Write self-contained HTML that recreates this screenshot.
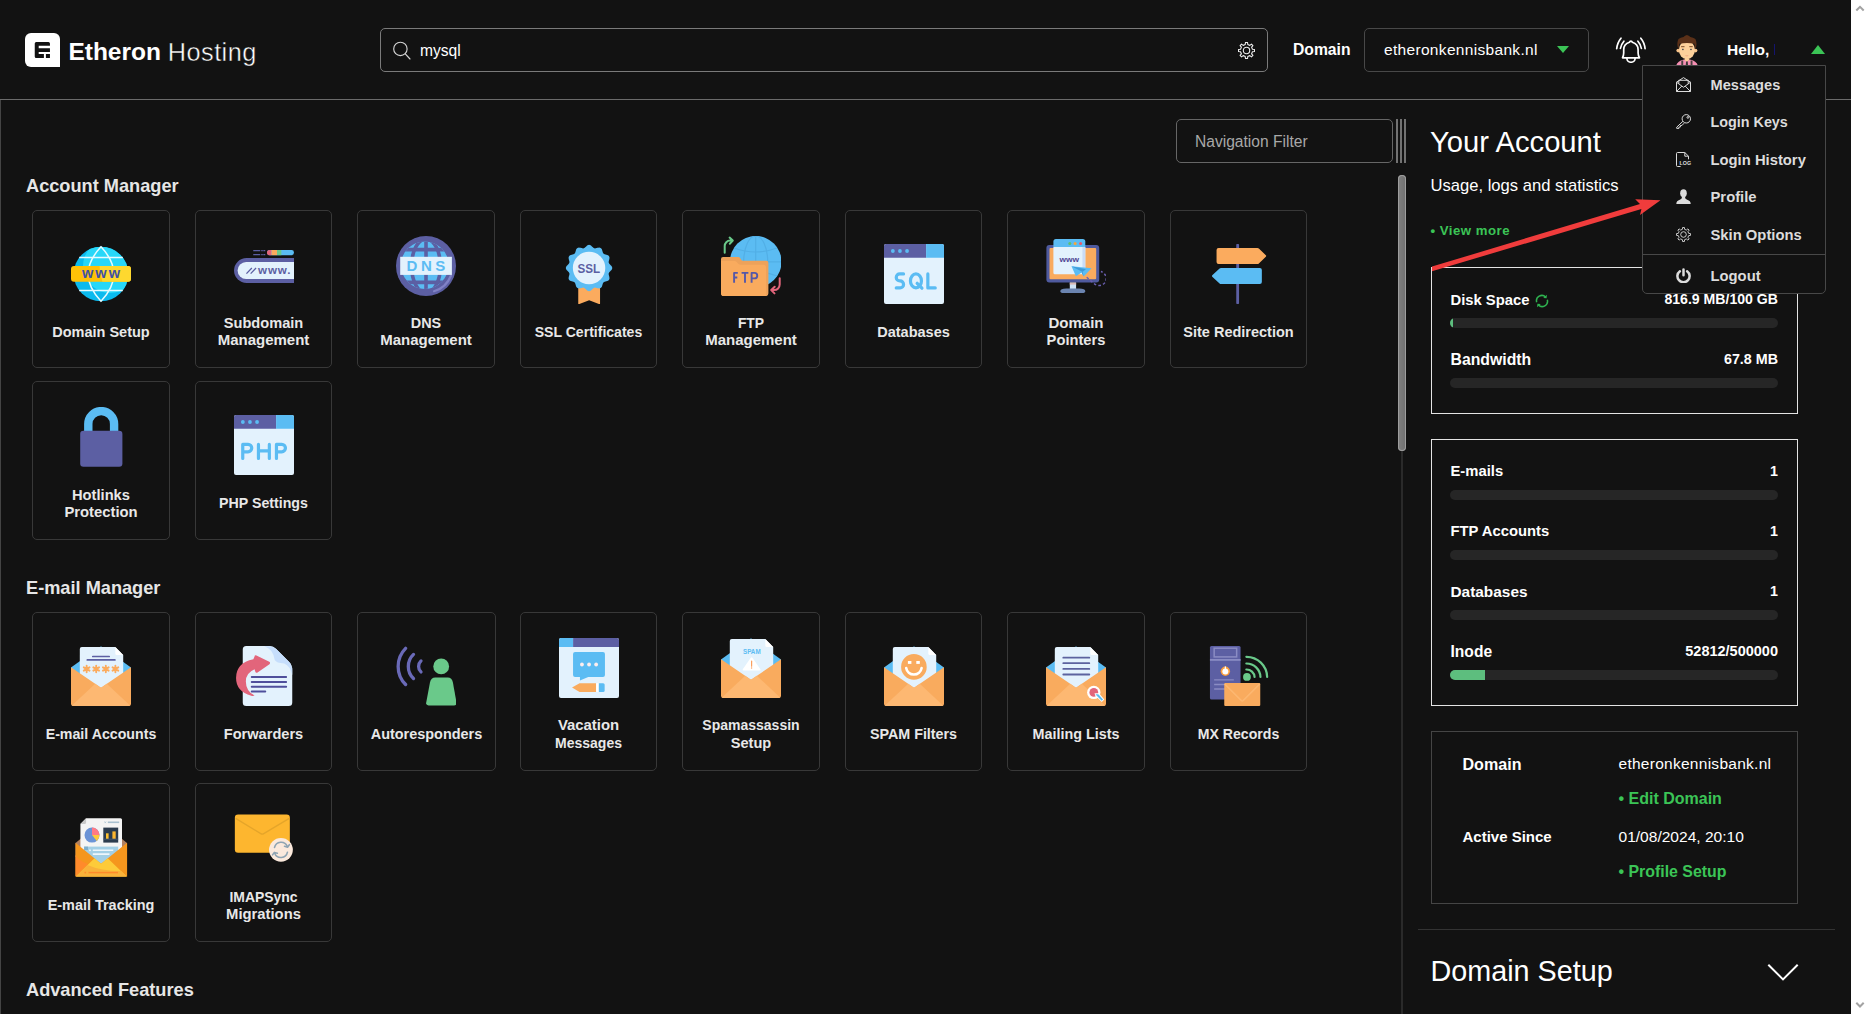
<!DOCTYPE html>
<html lang="en">
<head>
<meta charset="utf-8">
<title>Etheron Hosting</title>
<style>
*{box-sizing:border-box;margin:0;padding:0}
html,body{width:1869px;height:1014px;overflow:hidden;background:#121212}
body{position:relative;font-family:"Liberation Sans",sans-serif;color:#fff}
.abs{position:absolute}
.t{position:absolute;white-space:nowrap;line-height:1}
.b{font-weight:700}
/* header */
#hdrline{left:0;top:99px;width:1851px;height:1px;background:#6b6b6b}
#leftline{left:0;top:100px;width:1px;height:914px;background:#444}
#vscroll{left:1851px;top:0;width:18px;height:1014px;background:#fff}
#logo{left:25px;top:33px;width:35px;height:34px;background:#fff;border-radius:6px 6px 0 6px}
#search{left:380px;top:28px;width:888px;height:44px;border:1px solid #7a7a7a;border-radius:5px}
#domsel{left:1364px;top:28px;width:225px;height:44px;border:1px solid #484848;border-radius:5px}
.tri-d{width:0;height:0;border-left:6.5px solid transparent;border-right:6.5px solid transparent;border-top:7.5px solid #3bc456}
.tri-u{width:0;height:0;border-left:7.7px solid transparent;border-right:7.7px solid transparent;border-bottom:9.3px solid #3bc456}
/* dropdown */
#dd{left:1642px;top:65px;width:184px;height:229px;background:#121212;border:1px solid #484848;border-radius:0 0 5px 5px}
#ddsep{left:1643px;top:254px;width:182px;height:1px;background:#484848}
.ddt{color:#dcdcdc;font-weight:700;left:1710.5px}
/* main */
#navf{left:1176px;top:119px;width:217px;height:44px;border:1px solid #666;border-radius:5px}
.bar3{top:119px;width:2px;height:44px;background:#727272}
#thumb{left:1398px;top:175px;width:8px;height:276px;border-radius:4px;background:linear-gradient(90deg,#808080,#707070);box-shadow:inset 0 0 0 1px #9e9e9e}
#track{left:1401px;top:451px;width:2px;height:563px;background:#2a2a2a}
.sec{color:#e6e6e6;font-weight:700;left:26px}
.card{position:absolute;width:138px;height:158px;border:1px solid #383838;border-radius:5px}
.card svg{position:absolute;left:38px;width:60px;height:60px}
.card.one svg{top:33px}
.card.two svg{top:25px}
.card .lb{position:absolute;left:0;right:0;text-align:center;font-weight:700;font-size:14.4px;line-height:17px;color:#e8e8e8}
.card.one .lb{top:112.5px}
.card.two .lb{top:104.2px;line-height:16.4px}
/* right */
.box{position:absolute;left:1431px;width:367px;border:1px solid #e4e4e4}
.pb{position:absolute;left:1450px;width:328px;height:10px;border-radius:5px;background:#262626;overflow:hidden}
.pb i{display:block;height:10px;background:#5dbe7e}
.lbl{left:1450.5px;font-weight:700}
.val{right:91px;font-weight:700;text-align:right}
.g{color:#3bc456;font-weight:700}
</style>
</head>
<body>
<!-- HEADER -->
<div class="abs" id="logo"></div>
<div class="t b" style="left:68.4px;top:39.7px;font-size:24.5px">Etheron</div>
<div class="t" style="left:167.8px;top:39.9px;font-size:25.3px;letter-spacing:.45px;-webkit-text-stroke:.45px #121212">Hosting</div>
<div class="abs" id="search"></div>
<div class="t" style="left:420px;top:42.5px;font-size:15.6px">mysql</div>
<div class="t b" style="left:1293px;top:41.5px;font-size:15.7px">Domain</div>
<div class="abs" id="domsel"></div>
<div class="t" style="left:1384px;top:41.5px;font-size:15.5px;letter-spacing:.32px">etheronkennisbank.nl</div>
<div class="abs tri-d" style="left:1557px;top:46px"></div>
<div class="t b" style="left:1727px;top:41.5px;font-size:15.5px">Hello,</div>
<div class="abs tri-u" style="left:1810.5px;top:44.7px"></div><div class="abs" style="left:1774px;top:44px;width:1px;height:11px;background:#14146e"></div>

<svg class="abs" style="left:25px;top:33px" width="35" height="34" viewBox="0 0 35 34"><path d="M11.25 9H23.45A1.5 1.5 0 0 1 24.95 10.5V12.8H13.7V15.2H24.95V18.9H13.7V21H18.9V24.95H11.25A1.5 1.5 0 0 1 9.75 23.45V10.500A1.500 1.500 0 0 1 11.250 9ZM20.900 21H24.950V24.950H20.900Z" fill="#121212"/></svg>
<svg class="abs" style="left:391px;top:40px" width="22" height="22" viewBox="0 0 22 22" fill="none" stroke="#d4d4d4" stroke-width="1.150" stroke-linecap="round"><circle cx="9.400" cy="8.900" r="6.700"/><path d="M14.300 13.900L19 19"/></svg>
<svg class="abs" style="left:1238px;top:42px" width="17" height="17" viewBox="0 0 17 17" fill="none" stroke="#eee" stroke-width="1.100" stroke-linejoin="round"><path d="M7.22 2.54L7.48 0.46L9.52 0.46L9.78 2.54L11.81 3.38L13.46 2.10L14.90 3.54L13.62 5.19L14.46 7.22L16.54 7.48L16.54 9.52L14.46 9.78L13.62 11.81L14.90 13.46L13.46 14.90L11.81 13.62L9.78 14.46L9.52 16.54L7.48 16.54L7.22 14.46L5.19 13.62L3.54 14.90L2.10 13.46L3.38 11.81L2.54 9.78L0.46 9.52L0.46 7.48L2.54 7.22L3.38 5.19L2.10 3.54L3.54 2.10L5.19 3.38Z"/><circle cx="8.500" cy="8.500" r="3.200"/></svg>
<svg class="abs" style="left:1615px;top:36.8px" width="32" height="26.4" preserveAspectRatio="none" viewBox="0 0 32 28" fill="none" stroke="#fff" stroke-width="1.700" stroke-linecap="round" stroke-linejoin="round"><path d="M15.900 4.400Q17 4.400 17.300 5.600Q23.100 7.500 23.100 13.500V17Q23.100 19.500 24.500 22.100H7.500Q8.700 19.500 8.700 17V13.500Q8.700 7.500 14.500 5.600Q14.800 4.400 15.900 4.400Z"/><path d="M11.900 22.700A4.100 4.100 0 0 0 20.100 22.700"/><path d="M6 1.200Q2.200 6 1.700 12.500M8.900 4.400Q5.900 8 5.400 12.200M25.800 1.200Q29.600 6 30.100 12.500M22.900 4.400Q25.900 8 26.400 12.200"/></svg>
<svg class="abs" style="left:1675px;top:34px" width="24" height="32" viewBox="0 0 24 32"><path d="M10 22H13.800V28H10Z" fill="#f9c48a"/><path d="M1 32Q2.500 26.800 9.200 25.600L11.900 27.600L14.600 25.600Q21.500 26.800 23 32Z" fill="#f58fb3"/><path d="M6.300 26.500H8.200V32H6.300ZM15.600 26.500H17.500V32H15.600Z" fill="#4a4040"/><path d="M11.100 27.200H12.700L13.100 32H10.700Z" fill="#3d3535"/><path d="M9.200 25.600L11.900 27.600L14.600 25.600L13.600 24.800H10.200Z" fill="#fdd09a"/>
<circle cx="3.200" cy="16.600" r="1.800" fill="#f9c48a"/><circle cx="20.600" cy="16.600" r="1.800" fill="#f9c48a"/><ellipse cx="11.900" cy="16" rx="8.100" ry="9.100" fill="#fdd09a"/>
<path d="M3.300 15.500Q1.300 9 3.500 5Q5.500 3.300 8.500 3L10 1.800L11.900 0.900L13.800 1.800L15.300 3Q18.300 3.300 20.400 5Q22.500 9 20.500 15.500L19.300 9.800Q12 8.300 4.500 9.800Z" fill="#5a3018"/>
<path d="M6.100 12.700H9.500M14.300 12.700H17.700" stroke="#7a4a25" stroke-width="1"/><rect x="7" y="14.800" width="1.700" height="1.300" fill="#555"/><rect x="15.100" y="14.800" width="1.700" height="1.300" fill="#555"/><path d="M10.500 21.600Q11.900 22.200 13.300 21.600" stroke="#f0a080" stroke-width=".800" fill="none"/></svg>
<div class="abs" id="hdrline"></div>
<div class="abs" id="leftline"></div>

<!-- MAIN LEFT -->
<div class="abs" id="navf"></div>
<div class="t" style="left:1195px;top:133.5px;font-size:15.6px;color:#a8a8a8">Navigation Filter</div>
<div class="abs bar3" style="left:1396px"></div><div class="abs bar3" style="left:1400px"></div><div class="abs bar3" style="left:1404px"></div>
<div class="abs" id="thumb"></div>
<div class="abs" id="track"></div>

<div class="t sec" style="top:176.5px;font-size:18.2px">Account Manager</div>
<div class="card one" style="left:32px;top:210px;width:138px"><svg viewBox="0 0 60 60" id="ic210_0"><defs><clipPath id="cg"><circle cx="30" cy="30" r="27.3"/></clipPath></defs><circle cx="30" cy="30" r="27.3" fill="#0bbaee"/><circle cx="39" cy="22" r="27" fill="#27d7f8" clip-path="url(#cg)"/><g fill="none" stroke="#e6fbff" stroke-width="1.5"><path d="M8.2 13.5H51.8M8.2 46.5H51.8"/><path d="M30 2.8Q4.4 30 30 57.2Q55.6 30 30 2.8Z"/></g><rect x="0" y="22" width="60" height="15.7" rx="3" fill="#ffc107"/><path d="M28.5 22H57a3 3 0 0 1 3 3v9.7a3 3 0 0 1-3 3H31.5Q28.5 30 28.5 22Z" fill="#fed82f"/><text x="10.9" y="33.9" font-family="Liberation Sans,sans-serif" font-weight="700" font-size="14.6" fill="#3f51a5" textLength="38.3" lengthAdjust="spacing">www</text></svg><div class="lb"><span style="font-size:14.5px">Domain Setup</span></div></div>
<div class="card two" style="left:195px;top:210px;width:137px"><svg viewBox="0 0 60 60" id="ic210_1"><g transform="translate(-.75 0)"><path d="M61 22H13.3a12.5 12.5 0 0 0 0 25H61Z" fill="#5c5fa3"/><path d="M61 25.9H12.9a8.55 8.55 0 0 0 0 17.1H61Z" fill="#e3f2fd"/><path d="M13.2 37.6L18.6 32M17.4 37.6L22.8 32" stroke="#5c5fa3" stroke-width="1.3" fill="none"/><text x="24.8" y="37.8" font-family="Liberation Sans,sans-serif" font-weight="700" font-size="11.6" fill="#5c5fa3" textLength="32.5" lengthAdjust="spacing">www.</text><path d="M20 14.6H32M20 18.6H32" stroke="#5c5fa3" stroke-width="1.4" stroke-dasharray="7 1 1.5 .6 1.9 0"/><rect x="33.9" y="14" width="26.8" height="5.2" rx="2.4" fill="#5bbcf3"/><path d="M36.3 14h2V19.2h-2a2.4 2.4 0 0 1 0-5.2Z" fill="#e2657b"/><rect x="38.3" y="14" width="5.5" height="5.2" fill="#fbab5e"/><rect x="43.8" y="14" width="4.3" height="5.2" fill="#6ac98a"/></g></svg><div class="lb"><span style="font-size:14.6px">Subdomain</span><br><span style="font-size:15.0px">Management</span></div></div>
<div class="card two" style="left:357px;top:210px;width:138px"><svg viewBox="0 0 60 60" id="ic210_2"><defs><clipPath id="cd"><circle cx="28.8" cy="29.2" r="23.8"/></clipPath></defs><circle cx="30" cy="30" r="30" fill="#5c5fa3"/><circle cx="28.8" cy="29.2" r="23.8" fill="#5bbcf3"/><g fill="none" stroke="#5c5fa3" stroke-width="3.6" clip-path="url(#cd)"><path d="M30 2V58M4 13.6H56M4 46.4H56"/><ellipse cx="30" cy="30" rx="14.4" ry="27"/></g><path d="M55 39.500A26.500 26.500 0 0 1 38 55.300" stroke="#8082c6" stroke-width="2.200" fill="none" stroke-linecap="round"/><rect x="4.2" y="20.8" width="51.7" height="18.1" fill="#e3f2fd"/><text x="10.6" y="35.3" font-family="Liberation Sans,sans-serif" font-weight="700" font-size="15" fill="#5bbcf3" textLength="38.6" lengthAdjust="spacing">DNS</text></svg><div class="lb"><span style="font-size:14.4px">DNS</span><br><span style="font-size:15.0px">Management</span></div></div>
<div class="card one" style="left:520px;top:210px;width:137px"><svg viewBox="0 0 60 60" id="ic210_3"><g transform="translate(-.75 0)"><path d="M20 43H41.8V59.6a.6 .6 0 0 1-.9 .5L30.9 56.3 20.9 60.1a.6 .6 0 0 1-.9-.5Z" fill="#fbab5e"/><path d="M30.80 0.80L31.56 0.92L32.29 1.26L32.99 1.77L33.65 2.39L34.26 3.02L34.86 3.59L35.46 4.03L36.08 4.30L36.75 4.38L37.49 4.29L38.29 4.10L39.14 3.86L40.02 3.66L40.88 3.56L41.69 3.63L42.40 3.91L42.99 4.39L43.46 5.05L43.81 5.84L44.07 6.70L44.29 7.56L44.52 8.35L44.82 9.03L45.22 9.58L45.77 9.98L46.45 10.28L47.24 10.51L48.10 10.73L48.96 10.99L49.75 11.34L50.41 11.81L50.89 12.40L51.17 13.11L51.24 13.92L51.14 14.78L50.94 15.66L50.70 16.51L50.51 17.31L50.42 18.05L50.50 18.72L50.77 19.34L51.21 19.94L51.78 20.54L52.41 21.15L53.03 21.81L53.54 22.51L53.88 23.24L54.00 24.00L53.88 24.76L53.54 25.49L53.03 26.19L52.41 26.85L51.78 27.46L51.21 28.06L50.77 28.66L50.50 29.28L50.42 29.95L50.51 30.69L50.70 31.49L50.94 32.34L51.14 33.22L51.24 34.08L51.17 34.89L50.89 35.60L50.41 36.19L49.75 36.66L48.96 37.01L48.10 37.27L47.24 37.49L46.45 37.72L45.77 38.02L45.22 38.42L44.82 38.97L44.52 39.65L44.29 40.44L44.07 41.30L43.81 42.16L43.46 42.95L42.99 43.61L42.40 44.09L41.69 44.37L40.88 44.44L40.02 44.34L39.14 44.14L38.29 43.90L37.49 43.71L36.75 43.62L36.08 43.70L35.46 43.97L34.86 44.41L34.26 44.98L33.65 45.61L32.99 46.23L32.29 46.74L31.56 47.08L30.80 47.20L30.04 47.08L29.31 46.74L28.61 46.23L27.95 45.61L27.34 44.98L26.74 44.41L26.14 43.97L25.52 43.70L24.85 43.62L24.11 43.71L23.31 43.90L22.46 44.14L21.58 44.34L20.72 44.44L19.91 44.37L19.20 44.09L18.61 43.61L18.14 42.95L17.79 42.16L17.53 41.30L17.31 40.44L17.08 39.65L16.78 38.97L16.38 38.42L15.83 38.02L15.15 37.72L14.36 37.49L13.50 37.27L12.64 37.01L11.85 36.66L11.19 36.19L10.71 35.60L10.43 34.89L10.36 34.08L10.46 33.22L10.66 32.34L10.90 31.49L11.09 30.69L11.18 29.95L11.10 29.28L10.83 28.66L10.39 28.06L9.82 27.46L9.19 26.85L8.57 26.19L8.06 25.49L7.72 24.76L7.60 24.00L7.72 23.24L8.06 22.51L8.57 21.81L9.19 21.15L9.82 20.54L10.39 19.94L10.83 19.34L11.10 18.72L11.18 18.05L11.09 17.31L10.90 16.51L10.66 15.66L10.46 14.78L10.36 13.92L10.43 13.11L10.71 12.40L11.19 11.81L11.85 11.34L12.64 10.99L13.50 10.73L14.36 10.51L15.15 10.28L15.83 9.98L16.38 9.58L16.78 9.03L17.08 8.35L17.31 7.56L17.53 6.70L17.79 5.84L18.14 5.05L18.61 4.39L19.20 3.91L19.91 3.63L20.72 3.56L21.58 3.66L22.46 3.86L23.31 4.10L24.11 4.29L24.85 4.38L25.52 4.30L26.14 4.03L26.74 3.59L27.34 3.02L27.95 2.39L28.61 1.77L29.31 1.26L30.04 0.92Z" fill="#5bbcf3"/><circle cx="30.8" cy="24" r="16.2" fill="#e3f2fd"/><text x="19.3" y="28.8" font-family="Liberation Sans,sans-serif" font-weight="700" font-size="13.2" fill="#5c5fa3" textLength="22.6" lengthAdjust="spacingAndGlyphs">SSL</text></g></svg><div class="lb"><span style="font-size:14.05px">SSL Certificates</span></div></div>
<div class="card two" style="left:682px;top:210px;width:138px"><svg viewBox="0 0 60 60" id="ic210_4"><circle cx="34.7" cy="25.8" r="25.8" fill="#5bbcf3"/><g fill="none" stroke="#52afe6" stroke-width="1.2"><path d="M34.7 0V51.6M9 25.8H60.5"/><ellipse cx="34.7" cy="25.8" rx="12" ry="25.8"/><path d="M13 12Q34.7 20 56 12M13 40Q34.7 32 56 40"/></g><path d="M0 23a2 2 0 0 1 2-2H17.3a2 2 0 0 1 1.6 .8L20.3 24a2 2 0 0 0 1.6 .8H45.4a2 2 0 0 1 2 2V57.2a3 3 0 0 1-3 3H3a3 3 0 0 1-3-3Z" fill="#eda25a"/><path d="M0 25H13.5a3 3 0 0 1 2.2 1l1.6 1.8a3 3 0 0 0 2.2 1H42.5a2.5 2.5 0 0 1 2.5 2.5V60.2H3a3 3 0 0 1-3-3Z" fill="#f9ab5e"/><path d="M13.100 46.700V36.900H16.800M13.100 41.500H16.300M20.600 36.900H27.400M24 36.900V46.700M30.600 46.700V36.900H33.500a2.750 2.750 0 0 1 0 5.500H30.600" fill="none" stroke="#5558a8" stroke-width="1.900" stroke-linejoin="round"/><g fill="none" stroke-width="2" stroke-linecap="round" stroke-linejoin="round"><path d="M3.7 16.8V10a5.4 5.4 0 0 1 5.4-5.4H11.5M8.6 1.6L11.8 4.6L8.8 7.7" stroke="#6ac98a"/><path d="M58.7 42.2V48.6a5.5 5.5 0 0 1-5.5 5.5H50.6M53.7 50.8L50.2 54.1L53.5 57.4" stroke="#e2657b"/></g></svg><div class="lb"><span style="font-size:13.9px">FTP</span><br><span style="font-size:15.0px">Management</span></div></div>
<div class="card one" style="left:845px;top:210px;width:137px"><svg viewBox="0 0 60 60" id="ic210_5"><rect width="60" height="60" rx="2" fill="#e3f2fd"/><path d="M0 2a2 2 0 0 1 2-2H42.1V13.7H0Z" fill="#5c5fa3"/><path d="M42.1 0H58a2 2 0 0 1 2 2V13.7H42.1Z" fill="#5bbcf3"/><g transform="translate(-.75 0)"><circle cx="9.6" cy="7" r="1.9" fill="#5bbcf3"/><circle cx="16.7" cy="7" r="1.9" fill="#5bbcf3"/><circle cx="23.8" cy="7" r="1.9" fill="#5bbcf3"/><g fill="none" stroke="#5bbcf3" stroke-width="3.2" stroke-linecap="round" stroke-linejoin="round"><path d="M20.3 29.9H16.5a3.5 3.5 0 0 0 0 7H16.8a3.5 3.5 0 0 1 0 7H13"/><ellipse cx="32.7" cy="36.9" rx="5.5" ry="7"/><path d="M33.9 39.3L38.7 44.2M44.6 29.9V43.9H52"/></g></g></svg><div class="lb"><span style="font-size:14.5px">Databases</span></div></div>
<div class="card two" style="left:1007px;top:210px;width:138px"><svg viewBox="0 0 60 60" id="ic210_6"><rect x=".4" y="8.9" width="52.8" height="37.7" rx="3" fill="#4f5a9e"/><rect x="3.5" y="12.1" width="46.7" height="31.2" rx="1" fill="#f9ab5e"/><path d="M23.8 46.6H30.1V53.2H23.8Z" fill="#cfe3f7"/><path d="M23.8 46.6H30.1V48.6H23.8Z" fill="#d9b9b5"/><path d="M14.3 55.2q0-2.6 6-2.6H33.3q6 0 6 2.6 0 1.8-3 1.8H17.3q-3 0-3-1.8Z" fill="#6b84b0"/><path d="M7.4 5.4a2.5 2.5 0 0 1 2.5-2.5H36.8a2.5 2.5 0 0 1 2.5 2.5V11.1H7.4Z" fill="#5bbcf3"/><path d="M7.4 11.1H39.3V36.8a1.5 1.5 0 0 1-1.5 1.5H8.9a1.5 1.5 0 0 1-1.5-1.5Z" fill="#e3f2fd"/><path d="M36.4 11.1h2.9V38.3h-2.9Z" fill="#c9dcf7"/><circle cx="23.8" cy="7.4" r="1.5" fill="#5ec16f"/><circle cx="29.1" cy="7.4" r="1.5" fill="#f9a63a"/><circle cx="34.6" cy="7.4" r="1.5" fill="#ec5a6d"/><text x="13.5" y="26.4" font-family="Liberation Sans,sans-serif" font-weight="700" font-size="7.8" fill="#4f4593" textLength="19.6" lengthAdjust="spacingAndGlyphs">www</text><path d="M25.5 30.2L45.6 32.3 37.7 40.6 35.6 36.6 29.9 40.2Z" fill="#5bbcf3"/><path d="M25.5 30.2L40 33.2 35.6 36.6 37.7 40.6 36.6 35.9Z" fill="#3f9ad6"/><path d="M40.7 41.3L48.1 47.5A7.1 7.1 0 1 0 54.9 35.6" fill="none" stroke="#6a5fb0" stroke-width="1.5" stroke-dasharray="2.6 2.2"/></svg><div class="lb"><span style="font-size:15.0px">Domain</span><br><span style="font-size:14.7px">Pointers</span></div></div>
<div class="card one" style="left:1170px;top:210px;width:137px"><svg viewBox="0 0 60 60" id="ic210_7"><g transform="translate(-.75 0)"><rect x="28" y="0" width="2.8" height="60" rx=".8" fill="#5c5fa3"/><path d="M8.3 6a2 2 0 0 1 2-2H49.2a2 2 0 0 1 1.4 .6L57.6 11.3a1 1 0 0 1 0 1.4L50.6 19.4a2 2 0 0 1-1.4 .6H10.3a2 2 0 0 1-2-2Z" fill="#fbab5e"/><path d="M53.6 26a2 2 0 0 0-2-2H12.7a2 2 0 0 0-1.4 .6L4 31.3a1 1 0 0 0 0 1.4L11.3 39.5a2 2 0 0 0 1.4 .6H51.6a2 2 0 0 0 2-2Z" fill="#5bbcf3"/></g></svg><div class="lb"><span style="font-size:14.5px">Site Redirection</span></div></div>
<div class="card two" style="left:32px;top:381px;width:138px;height:159px"><svg viewBox="0 0 60 60" id="ic210_8"><path d="M17.3 26V17a12.9 12.9 0 0 1 25.8 0V26" fill="none" stroke="#5bbcf3" stroke-width="8.4"/><rect x="9.2" y="23.7" width="42.2" height="36" rx="3.2" fill="#5c5fa3"/></svg><div class="lb" style="top:105.2px"><span style="font-size:14.7px">Hotlinks</span><br><span style="font-size:14.8px">Protection</span></div></div>
<div class="card one" style="left:195px;top:381px;width:137px;height:159px"><svg viewBox="0 0 60 60" id="ic210_9"><rect width="60" height="60" rx="2" fill="#e3f2fd"/><path d="M0 2a2 2 0 0 1 2-2H42.1V13.7H0Z" fill="#5c5fa3"/><path d="M42.1 0H58a2 2 0 0 1 2 2V13.7H42.1Z" fill="#5bbcf3"/><g transform="translate(-.75 0)"><circle cx="9.6" cy="7" r="1.9" fill="#5bbcf3"/><circle cx="16.7" cy="7" r="1.9" fill="#5bbcf3"/><circle cx="23.8" cy="7" r="1.9" fill="#5bbcf3"/><g fill="none" stroke="#5bbcf3" stroke-width="3.2" stroke-linecap="round" stroke-linejoin="round"><path d="M9.5 43.5V29.4H14.8a3.7 3.7 0 0 1 0 7.4H9.5M25.2 29.4V43.5M36.1 29.4V43.5M25.2 35.8H36.1M43.2 43.5V29.4H48.5a3.7 3.7 0 0 1 0 7.4H43.2"/></g></g></svg><div class="lb"><span style="font-size:14.2px">PHP Settings</span></div></div>
<div class="t sec" style="top:578.5px;font-size:18.2px">E-mail Manager</div>
<div class="card one" style="left:32px;top:612px;width:138px;height:159px"><svg viewBox="0 0 60 60" id="ic612_0"><path d="M0 21.6 L28.6 .9 Q30 0 31.4 .9 L60 21.6 V40 H0Z" fill="#5bbcf3"/><path d="M8.8 3a2 2 0 0 1 2-2H44.3L52.2 8.9V46H8.8Z" fill="#e3f2fd"/><path d="M44.3 1V7.4a1.5 1.5 0 0 0 1.5 1.5H52.2Z" fill="#fff"/><path d="M21.8 10.5H38.2M16.3 13.9H43.9" stroke="#5c5fa3" stroke-width="1.7" stroke-linecap="round"/><path d="M15.65 19.70L15.65 26.30M12.79 21.35L18.51 24.65M18.51 21.35L12.79 24.65M25.20 19.70L25.20 26.30M22.34 21.35L28.06 24.65M28.06 21.35L22.34 24.65M34.80 19.70L34.80 26.30M31.94 21.35L37.66 24.65M37.66 21.35L31.94 24.65M44.40 19.70L44.40 26.30M41.54 21.35L47.26 24.65M47.26 21.35L41.54 24.65" stroke="#fbab5e" stroke-width="1.9" stroke-linecap="round"/><path d="M0 21.3 L30 41.8 L60 21.3 V57.5a2.5 2.5 0 0 1-2.5 2.5H2.5A2.5 2.5 0 0 1 0 57.5Z" fill="#f9ab5e"/><path d="M.9 59.4 L24.2 37.8 L28.9 41 Q30 41.8 31.1 41 L35.8 37.8 L59.1 59.4 Q58.5 60 57.5 60 H2.5 Q1.5 60 .9 59.4Z" fill="#fdb872"/></svg><div class="lb"><span style="font-size:14.2px">E-mail Accounts</span></div></div>
<div class="card one" style="left:195px;top:612px;width:137px;height:159px"><svg viewBox="0 0 60 60" id="ic612_1"><g transform="translate(-.75 0)"><path d="M9.5 3.5A3.5 3.5 0 0 1 13 0H36.5Q40 0 43 3L55.5 15.5Q59 19 59 24V56.5A3.5 3.5 0 0 1 55.5 60H13A3.5 3.5 0 0 1 9.500 56.5Z" fill="#e3f2fd"/><path d="M31 0.200H36.5Q40 0 43 3L55.5 15.5Q59 19 59 24V29Q57 20 51 17.500Q43 17 41.500 14Q40 3 31 0.200Z" fill="#c6defc"/><path d="M18.500 31H52.900M18.500 35.900H52.900M18.500 40.700H52.900M18.500 45.500H32" stroke="#4f4f9b" stroke-width="2" stroke-linecap="round"/><path d="M21.300 49.600Q12.600 45 12.600 35.500Q12.600 27 21.300 23.300L22 25.600Q22.600 27.500 24.300 26.500L36.200 18.200Q37.600 16.800 36 15.700L23.200 9.500Q21.400 8.800 21.300 10.500L20.100 13.300Q2.800 17 2.800 32Q2.800 45.500 18 49.800Q20 50.300 21.300 49.600Z" fill="#e2657b"/></g></svg><div class="lb"><span style="font-size:14.6px">Forwarders</span></div></div>
<div class="card one" style="left:357px;top:612px;width:139px;height:159px"><svg viewBox="0 0 60 60" id="ic612_2"><circle cx="45.2" cy="20.4" r="7.9" fill="#6ac98a"/><path d="M39.200 31.400H51.800Q55.900 31.400 56.900 36.500L60.500 56.600Q60.900 59.400 58.100 59.400H32.500Q29.800 59.400 30.200 56.600L34 36.500Q35 31.400 39.200 31.400Z" fill="#6ac98a"/><g fill="none" stroke="#6a6ab8" stroke-width="3.300" stroke-linecap="round"><path d="M9.600 2.300A25.700 25.700 0 0 0 9.600 38.500"/><path d="M17.500 8.400A16.600 16.600 0 0 0 17.500 32.500"/><path d="M25 14.900A7.500 7.500 0 0 0 25 25.900"/></g></svg><div class="lb"><span style="font-size:14.45px">Autoresponders</span></div></div>
<div class="card two" style="left:520px;top:612px;width:137px;height:159px"><svg viewBox="0 0 60 60" id="ic612_3"><rect width="60" height="60" rx="2" fill="#e3f2fd"/><path d="M0 2A2 2 0 0 1 2 0H14.100V8.900H0Z" fill="#5bbcf3"/><path d="M14.100 0H58A2 2 0 0 1 60 2V8.900H14.100Z" fill="#5c5fa3"/><g transform="translate(-.75 0)"><path d="M14.800 16A2 2 0 0 1 16.800 14H44.700A2 2 0 0 1 46.700 16V36.900A2 2 0 0 1 44.700 38.900H30L21.700 42.500V38.900H16.800A2 2 0 0 1 14.800 36.900Z" fill="#5bbcf3"/><circle cx="23.700" cy="26.500" r="1.900" fill="#fdeeee"/><circle cx="30.800" cy="26.500" r="1.900" fill="#fdeeee"/><circle cx="37.900" cy="26.500" r="1.900" fill="#fdeeee"/><path d="M13.800 49.600L21.300 45.200H37.900V53.900H21.300Z" fill="#f9ab5e"/><rect x="37.900" y="45.200" width="2.500" height="8.700" fill="#fff"/><path d="M40.600 45.200H44.900A1.500 1.500 0 0 1 46.400 46.700V52.400A1.500 1.500 0 0 1 44.900 53.900H40.600Z" fill="#5bbcf3"/></g></svg><div class="lb" style="top:103.2px;line-height:18px"><span style="font-size:14.9px">Vacation</span><br><span style="font-size:14.0px">Messages</span></div></div>
<div class="card two" style="left:682px;top:612px;width:138px;height:159px"><svg viewBox="0 0 60 60" id="ic612_4"><path d="M0 21.6 L28.6 .9 Q30 0 31.4 .9 L60 21.6 V40 H0Z" fill="#5bbcf3"/><path d="M8.8 3a2 2 0 0 1 2-2H44.3L52.2 8.9V46H8.8Z" fill="#e3f2fd"/><path d="M44.3 1V7.4a1.5 1.5 0 0 0 1.5 1.5H52.2Z" fill="#fff"/><text x="22" y="15.600" font-family="Liberation Sans,sans-serif" font-weight="700" font-size="6.300" fill="#5bbcf3" textLength="17.600" lengthAdjust="spacingAndGlyphs">SPAM</text><path d="M29.600 20.100Q30.600 18.600 31.600 20.100L39.400 31.200Q40.200 32.600 38.600 32.600H22.600Q21 32.600 21.800 31.200Z" fill="#fff"/><path d="M30.600 23.200V28.200" stroke="#fb9f5e" stroke-width="1.200" stroke-linecap="round"/><circle cx="30.600" cy="30" r=".700" fill="#fb9f5e"/><path d="M0 21.3 L30 41.8 L60 21.3 V57.5a2.5 2.5 0 0 1-2.5 2.5H2.5A2.5 2.5 0 0 1 0 57.5Z" fill="#f9ab5e"/><path d="M.9 59.4 L24.2 37.8 L28.9 41 Q30 41.8 31.1 41 L35.8 37.8 L59.1 59.4 Q58.5 60 57.5 60 H2.5 Q1.5 60 .9 59.4Z" fill="#fdb872"/></svg><div class="lb" style="top:103.2px;line-height:18px"><span style="font-size:14.0px">Spamassassin</span><br><span style="font-size:14.6px">Setup</span></div></div>
<div class="card one" style="left:845px;top:612px;width:137px;height:159px"><svg viewBox="0 0 60 60" id="ic612_5"><path d="M0 21.6 L28.6 .9 Q30 0 31.4 .9 L60 21.6 V40 H0Z" fill="#5bbcf3"/><path d="M8.8 3a2 2 0 0 1 2-2H44.3L52.2 8.9V46H8.8Z" fill="#e3f2fd"/><path d="M44.3 1V7.4a1.5 1.5 0 0 0 1.5 1.5H52.2Z" fill="#fff"/><circle cx="29.900" cy="20.900" r="12.800" fill="#f9ab5e"/><rect x="23.900" y="15" width="3.500" height="2.900" fill="#fff"/><rect x="32.300" y="15" width="3.500" height="2.900" fill="#fff"/><path d="M22.200 22A7.800 7.800 0 0 0 37.600 22" fill="none" stroke="#fff" stroke-width="2.600" stroke-linecap="round"/><path d="M0 21.3 L30 41.8 L60 21.3 V57.5a2.5 2.5 0 0 1-2.5 2.5H2.5A2.5 2.5 0 0 1 0 57.5Z" fill="#f9ab5e"/><path d="M.9 59.4 L24.2 37.8 L28.9 41 Q30 41.8 31.1 41 L35.8 37.8 L59.1 59.4 Q58.5 60 57.5 60 H2.5 Q1.5 60 .9 59.4Z" fill="#fdb872"/></svg><div class="lb"><span style="font-size:14.3px">SPAM Filters</span></div></div>
<div class="card one" style="left:1007px;top:612px;width:138px;height:159px"><svg viewBox="0 0 60 60" id="ic612_6"><path d="M0 21.6 L28.6 .9 Q30 0 31.4 .9 L60 21.6 V40 H0Z" fill="#5bbcf3"/><path d="M8.8 3a2 2 0 0 1 2-2H44.3L52.2 8.9V46H8.8Z" fill="#e3f2fd"/><path d="M44.3 1V7.4a1.5 1.5 0 0 0 1.5 1.5H52.2Z" fill="#fff"/><path d="M17.300 11.700H43.300M17.300 17.200H43.300M17.300 22.900H43.300M17.300 28.500H43.300" stroke="#5c639f" stroke-width="1.800" stroke-linecap="round"/><path d="M0 21.3 L30 41.8 L60 21.3 V57.5a2.5 2.5 0 0 1-2.5 2.5H2.5A2.5 2.5 0 0 1 0 57.5Z" fill="#f9ab5e"/><path d="M.9 59.4 L24.2 37.8 L28.9 41 Q30 41.8 31.1 41 L35.8 37.8 L59.1 59.4 Q58.5 60 57.5 60 H2.5 Q1.5 60 .9 59.4Z" fill="#fdb872"/><circle cx="47.800" cy="46.400" r="6.700" fill="#fff"/><circle cx="47.800" cy="46.400" r="4.400" fill="#e2657b"/><path d="M48.500 47.200H53L58.300 53.400 55.800 56 50 50.500V52Z" fill="#fff"/><path d="M49.500 48.200H52.300L57 53.400 55.700 54.700 50.800 49.800Z" fill="#5bbcf3"/></svg><div class="lb"><span style="font-size:14.35px">Mailing Lists</span></div></div>
<div class="card one" style="left:1170px;top:612px;width:137px;height:159px"><svg viewBox="0 0 60 60" id="ic612_7"><g transform="translate(-.75 0)"><rect x="1.700" y="0" width="30.600" height="53.500" rx="1.500" fill="#5c5fa3"/><rect x="5.900" y="2.200" width="22.500" height="8.700" fill="none" stroke="#8a8cc4" stroke-width="1.500"/><path d="M1.700 13.900H32.300" stroke="#8a8cc4" stroke-width="1.800"/><circle cx="17.100" cy="25.300" r="4.700" fill="#fb9f3e"/><circle cx="17.100" cy="25.500" r="3" fill="#fff"/><path d="M17.100 20.800V24" stroke="#fff" stroke-width="1.200" stroke-linecap="round"/><path d="M5.900 33.800H25.600M5.900 38.500H25.600M5.900 43H25.600" stroke="#8a8cc4" stroke-width="1.300"/><rect x="16" y="36.900" width="36" height="23.100" rx="1" fill="#f9ab5e"/><path d="M16.500 38L33 54.500Q34 55.500 35 54.500L51.500 38" fill="none" stroke="#fdb872" stroke-width="1.600"/><circle cx="38.700" cy="30.900" r="3.900" fill="#6ac98a"/><g fill="none" stroke="#6ac98a" stroke-width="2.200" stroke-linecap="round"><path d="M38.100 23.500A7.900 7.900 0 0 1 46.300 31"/><path d="M38.100 17.500A14 14 0 0 1 52.200 31"/><path d="M38.100 10.800A20.700 20.700 0 0 1 58.900 31"/></g></g></svg><div class="lb"><span style="font-size:14.1px">MX Records</span></div></div>
<div class="card one" style="left:32px;top:783px;width:138px;height:159px"><svg viewBox="0 0 60 60" id="ic612_8"><path d="M4.500 26L10 21.500H50.500L56 26V40H4.500Z" fill="#b08060"/><path d="M9.400 6.900L15.100 1.300H49.500A1.500 1.500 0 0 1 51 2.800V46H9.400Z" fill="#f4f4f4"/><path d="M9.400 6.900H13.600A1.500 1.500 0 0 0 15.100 5.400V1.300Z" fill="#c9c9c9"/><path d="M36.800 5.300H48.200" stroke="#a8c0d0" stroke-width="1.600"/><path d="M33.500 4.500L35 6.100M35 4.500L33.500 6.100" stroke="#a8c0d0" stroke-width=".700"/><circle cx="21" cy="18.100" r="7.500" fill="#6b93d6"/><path d="M21 18.100V10.600A7.500 7.500 0 0 1 28.500 18.100Z" fill="#ff7a85"/><path d="M21 18.100H28.500A7.500 7.500 0 0 1 25.800 23.900Z" fill="#fdcb3a"/><rect x="32.300" y="10.600" width="14.900" height="15" fill="#2b3b4e"/><rect x="35" y="16.300" width="2.600" height="5.600" fill="#fdc02f"/><rect x="41.400" y="14.400" width="3.300" height="7.500" fill="#fdb62f"/><path d="M32.300 22.200H47.200" stroke="#4a5e78" stroke-width=".800"/><rect x="13.100" y="29.600" width="34.100" height="18" fill="#a3cfe6"/><path d="M13.100 29.600H17V33H13.100Z" fill="#7faecb"/><path d="M21.800 33.300H42.300M21.800 37.100H38.500" stroke="#eef6fb" stroke-width="1.600"/><rect x="18.200" y="32.500" width="1.600" height="1.600" fill="#eef6fb"/><path d="M4.500 25.800L30.100 46.700L56.100 25.800V59.600H4.500Z" fill="#f5961d"/><path d="M4.500 38Q8 44 17 47L4.500 59.600Z" fill="#ff8a2b"/><path d="M4.900 59.600L23.500 41.300L30.100 46.700L36.700 41.300L55.700 59.600Z" fill="#fdcb3a"/><path d="M4.900 59.600L16.500 48Q30 54 50 54L55.700 59.600Z" fill="#f9b23a"/><path d="M17.500 55.600H47" stroke="#ff8a2b" stroke-width="1.500"/><rect x="13.500" y="54.800" width="1.600" height="1.600" fill="#ff8a2b"/></svg><div class="lb"><span style="font-size:14.45px">E-mail Tracking</span></div></div>
<div class="card two" style="left:195px;top:783px;width:137px;height:159px"><svg viewBox="0 0 60 60" id="ic612_9"><g transform="translate(-.75 0)"><rect x="1.600" y="5.500" width="55" height="38.300" rx="3.200" fill="#fdb62f"/><path d="M2.800 9.600L27.500 24.600Q29 25.500 30.500 24.600L55.600 9.600" fill="none" stroke="#e5a52a" stroke-width="1.300" stroke-linecap="round"/><circle cx="47.700" cy="40.800" r="11.900" fill="#fbe9dc"/><g fill="none" stroke="#8fa4b3" stroke-width="1.600" stroke-linecap="round" stroke-linejoin="round"><path d="M41.300 38.400A6.700 6.700 0 0 1 54 37.300M56.100 35.700L54.300 38.200L51.300 37.300"/><path d="M54.200 43.200A6.700 6.700 0 0 1 41.400 44.300M39.300 45.900L41.100 43.400L44.100 44.300"/></g></g></svg><div class="lb" style="top:105.2px"><span style="font-size:13.95px">IMAPSync</span><br><span style="font-size:14.8px">Migrations</span></div></div>
<div class="t sec" style="top:980.5px;font-size:18.2px">Advanced Features</div>

<!-- RIGHT PANEL -->
<div class="t" style="left:1430px;top:127.5px;font-size:29.2px">Your Account</div>
<div class="t" style="left:1430.5px;top:178px;font-size:16.6px">Usage, logs and statistics</div>
<div class="t g" style="left:1430.5px;top:224.4px;font-size:13.2px;letter-spacing:.5px">• View more</div>

<div class="box" style="top:267px;height:147px"></div>
<div class="box" style="top:439px;height:267px"></div>
<div class="box" style="top:731px;height:173px;border-color:#454545"></div>

<div class="t lbl" style="top:292.5px;font-size:14.8px">Disk Space</div>
<div class="t val" style="top:292.1px;font-size:14.1px">816.9 MB/100 GB</div>
<div class="pb" style="top:318px"><i style="width:3px"></i></div>
<div class="t lbl" style="top:352px;font-size:15.8px">Bandwidth</div>
<div class="t val" style="top:352.1px;font-size:14.3px">67.8 MB</div>
<div class="pb" style="top:378px"></div>

<div class="t lbl" style="top:464px;font-size:14.8px">E-mails</div>
<div class="t val" style="top:463.6px;font-size:14.3px">1</div>
<div class="pb" style="top:490px"></div>
<div class="t lbl" style="top:524px;font-size:14.8px">FTP Accounts</div>
<div class="t val" style="top:523.6px;font-size:14.3px">1</div>
<div class="pb" style="top:550px"></div>
<div class="t lbl" style="top:584px;font-size:15.4px">Databases</div>
<div class="t val" style="top:583.6px;font-size:14.3px">1</div>
<div class="pb" style="top:610px"></div>
<div class="t lbl" style="top:643.7px;font-size:15.6px">Inode</div>
<div class="t val" style="top:643.6px;font-size:14.5px">52812/500000</div>
<div class="pb" style="top:670px"><i style="width:35px"></i></div>

<div class="t b" style="left:1462.5px;top:755.7px;font-size:16.1px">Domain</div>
<div class="t" style="left:1618.5px;top:756px;font-size:15.5px;letter-spacing:.27px">etheronkennisbank.nl</div>
<div class="t g" style="left:1618.5px;top:790.5px;font-size:16px">• Edit Domain</div>
<div class="t b" style="left:1462.5px;top:829px;font-size:15px">Active Since</div>
<div class="t" style="left:1618.5px;top:829px;font-size:15.55px">01/08/2024, 20:10</div>
<div class="t g" style="left:1618.5px;top:863.5px;font-size:15.9px">• Profile Setup</div>
<div class="abs" style="left:1418px;top:929px;width:417px;height:1px;background:#333"></div>
<div class="t" style="left:1430.5px;top:957.3px;font-size:28.75px">Domain Setup</div>


<svg class="abs" style="left:1535px;top:294px" width="14" height="14" viewBox="0 0 14 14" fill="none" stroke="#2fb350" stroke-width="1.500"><path d="M1.700 8.200A5.300 5.300 0 0 1 10.600 3.100"/><path d="M12.300 5.800A5.300 5.300 0 0 1 3.400 10.900"/><path d="M8.200 3.900L11.600 4.300L11.900 .8ZM5.800 10.100L2.400 9.700L2.100 13.200Z" fill="#2fb350" stroke="none"/></svg>
<svg class="abs" style="left:1765px;top:961px" width="36" height="22" viewBox="0 0 36 22" fill="none" stroke="#fff" stroke-width="2"><path d="M3.300 3.700L18 18.400L32.700 3.700"/></svg>
<!-- DROPDOWN -->
<div class="abs" id="dd"></div>
<div class="abs" id="ddsep"></div>


<div class="t ddt" style="top:77.5px;font-size:14.6px">Messages</div>
<div class="t ddt" style="top:114.7px;font-size:14.35px">Login Keys</div>
<div class="t ddt" style="top:152.5px;font-size:14.8px">Login History</div>
<div class="t ddt" style="top:189.5px;font-size:14.8px">Profile</div>
<div class="t ddt" style="top:227.5px;font-size:14.8px">Skin Options</div>
<div class="t ddt" style="top:268.5px;font-size:14.8px">Logout</div>

<svg class="abs" style="left:1676px;top:77px" width="15" height="15" viewBox="0 0 15 15" fill="none" stroke="#dcdcdc" stroke-width="1"><path d="M.5 5.200V14.500H14.500V5.200L7.500 .600ZM.500 5.200L7.500 10.300L14.500 5.200M.500 14.500L5.800 9.100M14.500 14.500L9.200 9.100M2.800 6.800V3.300H12.200V6.800"/></svg>
<svg class="abs" style="left:1676px;top:114px" width="15" height="15" viewBox="0 0 15 15" fill="none" stroke="#dcdcdc" stroke-width="1"><circle cx="10.300" cy="4.800" r="4.200"/><circle cx="11.900" cy="3.400" r=".900"/><path d="M6.900 7.300L.700 13.200V14.400H2.900V13H4.400V11.500H5.900L8.100 9.200"/></svg>
<svg class="abs" style="left:1676px;top:152px" width="16" height="15" viewBox="0 0 16 15" fill="none" stroke="#dcdcdc" stroke-width="1"><path d="M4.600 14.500H1.500A1 1 0 0 1 .5 13.500V1.500A1 1 0 0 1 1.500 .5H8.800L12.500 4.200V7.300M8.800 .500V4.200H12.500"/><text x="3.600" y="12.800" font-family="Liberation Sans,sans-serif" font-weight="700" font-size="5.600" fill="#dcdcdc" stroke="none" textLength="11.600" lengthAdjust="spacingAndGlyphs">LOG</text></svg>
<svg class="abs" style="left:1676px;top:189px" width="15" height="15" viewBox="0 0 15 15" fill="#dcdcdc"><ellipse cx="7.500" cy="4.300" rx="3.300" ry="4.100"/><path d="M.300 15Q.300 11.800 3.800 10.800Q6 10.200 6 8H9Q9 10.200 11.200 10.800Q14.700 11.800 14.700 15Z"/></svg>
<svg class="abs" style="left:1676px;top:227px" width="15" height="15" viewBox="0 0 15 15" fill="none" stroke="#dcdcdc" stroke-width=".900" stroke-linejoin="round"><path d="M6.38 2.32L6.61 0.46L8.39 0.46L8.62 2.32L10.37 3.05L11.85 1.89L13.11 3.15L11.95 4.63L12.68 6.38L14.54 6.61L14.54 8.39L12.68 8.62L11.95 10.37L13.11 11.85L11.85 13.11L10.37 11.95L8.62 12.68L8.39 14.54L6.61 14.54L6.38 12.68L4.63 11.95L3.15 13.11L1.89 11.85L3.05 10.37L2.32 8.62L0.46 8.39L0.46 6.61L2.32 6.38L3.05 4.63L1.89 3.15L3.15 1.89L4.63 3.05Z"/><circle cx="7.500" cy="7.500" r="2.800"/></svg>
<svg class="abs" style="left:1676px;top:268px" width="15" height="15" viewBox="0 0 15 15" fill="none" stroke="#dcdcdc" stroke-width="2.500" stroke-linecap="round"><path d="M3.900 3.200A6.100 6.100 0 1 0 11.100 3.200M7.500 1.500V7.200"/></svg>
<svg class="abs" style="left:1425px;top:190px" width="245" height="90" viewBox="1425 190 245 90"><path d="M1432 266.600L1640 203.900L1635.200 199.200L1660.500 200.200L1640 215L1641.400 208.900L1432 271.300Z" fill="#f03c3c"/></svg>
<!-- page scrollbar -->
<div class="abs" id="vscroll"></div><svg class="abs" style="left:1851px;top:0" width="18" height="1014" viewBox="0 0 18 1014" fill="none" stroke="#a3a3a3" stroke-width="2"><path d="M5.300 10.500L9 6.800L12.700 10.500M5.300 1002.800L9 1006.500L12.700 1002.800"/></svg>
</body>
</html>
